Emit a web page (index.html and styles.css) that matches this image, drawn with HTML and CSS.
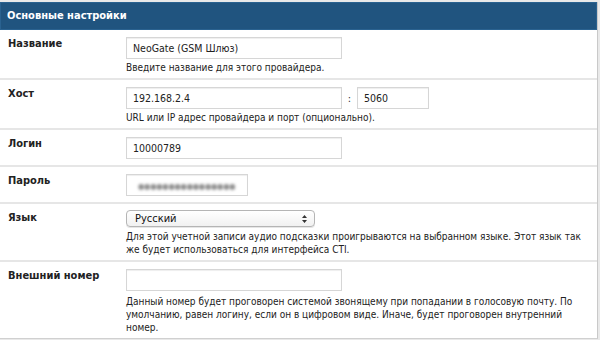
FILE: index.html
```html
<!DOCTYPE html>
<html lang="ru">
<head>
<meta charset="utf-8">
<title>Основные настройки</title>
<link rel="stylesheet" href="styles.css">
</head>
<body>
<div class="panel">
  <div class="panel-head">Основные настройки</div>

  <div class="row">
    <div class="label">Название</div>
    <div class="field">
      <div class="input w216">NeoGate (GSM Шлюз)</div>
      <div class="hint">Введите название для этого провайдера.</div>
    </div>
  </div>

  <div class="row">
    <div class="label">Хост</div>
    <div class="field">
      <div class="inline">
        <div class="input w216">192.168.2.4</div>
        <span class="colon">:</span>
        <div class="input w72">5060</div>
      </div>
      <div class="hint">URL или IP адрес провайдера и порт (опционально).</div>
    </div>
  </div>

  <div class="row">
    <div class="label">Логин</div>
    <div class="field">
      <div class="input w216">10000789</div>
    </div>
  </div>

  <div class="row">
    <div class="label">Пароль</div>
    <div class="field">
      <div class="input w122"><span class="blurred">●●●●●●●●●●●●●●●●</span></div>
    </div>
  </div>

  <div class="row">
    <div class="label">Язык</div>
    <div class="field">
      <div class="select">
        <span>Русский</span>
        <svg class="arrows" width="7" height="10" viewBox="0 0 7 10"><path d="M1 4 L3.5 1 L6 4 Z M1 6 L3.5 9 L6 6 Z" fill="#333"/></svg>
      </div>
      <div class="hint">Для этой учетной записи аудио подсказки проигрываются на выбранном языке. Этот язык так же будет использоваться для интерфейса CTI.</div>
    </div>
  </div>

  <div class="row last">
    <div class="label">Внешний номер</div>
    <div class="field">
      <div class="input w216"></div>
      <div class="hint">Данный номер будет проговорен системой звонящему при попадании в голосовую почту. По умолчанию, равен логину, если он в цифровом виде. Иначе, будет проговорен внутренний номер.</div>
    </div>
  </div>
</div>
</body>
</html>
```

FILE: styles.css
```css
html, body {
  margin: 0;
  padding: 0;
}
body {
  background: #e9e9e9;
  font-family: "DejaVu Sans Condensed", "DejaVu Sans", sans-serif;
  color: #222;
  padding-top: 2px;
  width: 600px;
  height: 340px;
  overflow: hidden;
}
.panel {
  width: 597px;
  background: #fff;
  border-right: 1px solid #c9c9c9;
  border-bottom: 1px solid #d0d0d0;
}
.panel-head {
  background: #20547f;
  box-shadow: inset 0 0 0 1px #2a6290;
  color: #fff;
  font-weight: bold;
  font-size: 11px;
  height: 28px;
  line-height: 28px;
  padding-left: 7px;
}
.row {
  display: grid;
  grid-template-columns: 126px 1fr;
  border-bottom: 2px solid #e6e6e6;
  padding: 7px 0 4px 0;
}
.row.last {
  border-bottom: none;
}
.label {
  padding-left: 8px;
  font-weight: bold;
  font-size: 11px;
  line-height: 13px;
  color: #222;
}
.field {
  display: flex;
  flex-direction: column;
  align-items: flex-start;
}
.inline {
  display: flex;
  align-items: center;
  margin-bottom: 2px;
}
.input {
  box-sizing: border-box;
  height: 22px;
  border: 1px solid #d6d6d6;
  box-shadow: inset 0 1px 1px #eee;
  background: #fff;
  font-size: 10.5px;
  line-height: 20px;
  padding-left: 6px;
  color: #222;
  margin-bottom: 2px;
  white-space: nowrap;
  overflow: hidden;
}
.row.last .input {
  margin-bottom: 4px;
}
.inline .input {
  margin-bottom: 0;
}
.w216 { width: 216px; }
.w72 { width: 72px; }
.w122 { width: 122px; padding-left: 11px; }
.colon {
  width: 15px;
  text-align: center;
  font-size: 11px;
  color: #333;
}
.blurred {
  display: inline-block;
  color: #8a8a8a;
  font-size: 8px;
  letter-spacing: -0.2px;
  filter: blur(1.4px);
}
.select {
  box-sizing: border-box;
  width: 189px;
  height: 17px;
  margin-top: -1px;
  border: 1px solid #b5b5b5;
  border-radius: 4px;
  background: linear-gradient(#ffffff, #f1f1f1);
  box-shadow: 0 1px 0 #e6e6e6;
  display: flex;
  align-items: center;
  justify-content: space-between;
  padding: 0 6px 0 8px;
  font-size: 11px;
  color: #111;
  margin-bottom: 3px;
}
.arrows {
  display: block;
}
.hint {
  font-size: 10px;
  line-height: 13px;
  color: #222;
  max-width: 465px;
}
```
